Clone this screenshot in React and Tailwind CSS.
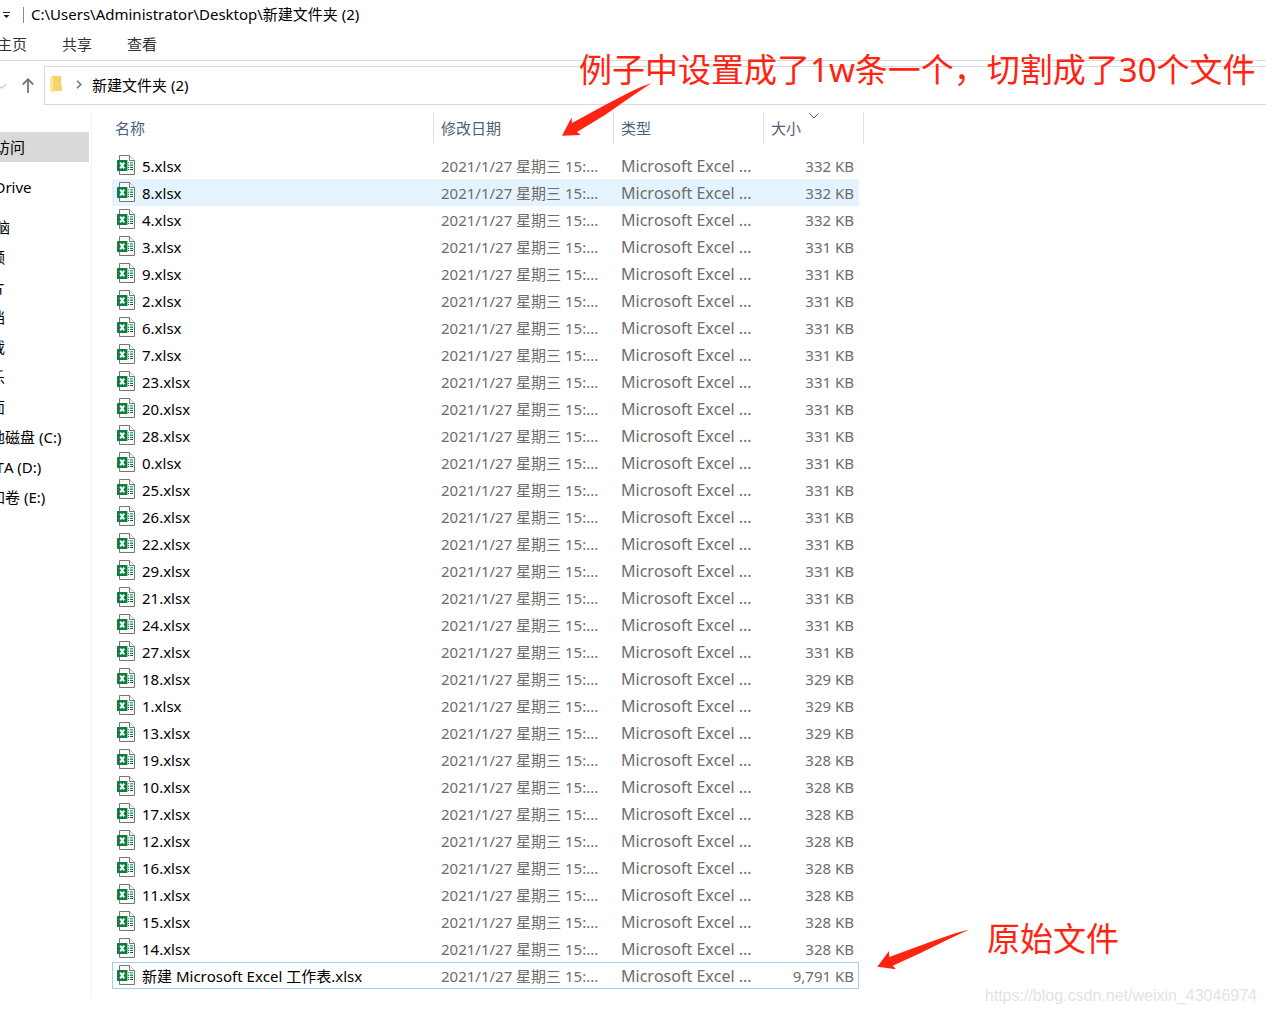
import React, { useState } from 'react';

const MODIFIED = '2021/1/27 星期三 15:...';
const FILE_TYPE = 'Microsoft Excel ...';

const files = [
  { name: '5.xlsx', size: '332 KB' },
  { name: '8.xlsx', size: '332 KB' },
  { name: '4.xlsx', size: '332 KB' },
  { name: '3.xlsx', size: '331 KB' },
  { name: '9.xlsx', size: '331 KB' },
  { name: '2.xlsx', size: '331 KB' },
  { name: '6.xlsx', size: '331 KB' },
  { name: '7.xlsx', size: '331 KB' },
  { name: '23.xlsx', size: '331 KB' },
  { name: '20.xlsx', size: '331 KB' },
  { name: '28.xlsx', size: '331 KB' },
  { name: '0.xlsx', size: '331 KB' },
  { name: '25.xlsx', size: '331 KB' },
  { name: '26.xlsx', size: '331 KB' },
  { name: '22.xlsx', size: '331 KB' },
  { name: '29.xlsx', size: '331 KB' },
  { name: '21.xlsx', size: '331 KB' },
  { name: '24.xlsx', size: '331 KB' },
  { name: '27.xlsx', size: '331 KB' },
  { name: '18.xlsx', size: '329 KB' },
  { name: '1.xlsx', size: '329 KB' },
  { name: '13.xlsx', size: '329 KB' },
  { name: '19.xlsx', size: '328 KB' },
  { name: '10.xlsx', size: '328 KB' },
  { name: '17.xlsx', size: '328 KB' },
  { name: '12.xlsx', size: '328 KB' },
  { name: '16.xlsx', size: '328 KB' },
  { name: '11.xlsx', size: '328 KB' },
  { name: '15.xlsx', size: '328 KB' },
  { name: '14.xlsx', size: '328 KB' },
  { name: '新建 Microsoft Excel 工作表.xlsx', size: '9,791 KB' },
];

const drives = ['视频', '图片', '文档', '下载', '音乐', '桌面', '本地磁盘 (C:)', 'DATA (D:)', '新加卷 (E:)'];

const ExcelIcon = () => (
  <svg width="18" height="20" viewBox="0 0 18 20" className="mb-[2px] shrink-0" aria-hidden="true">
    <path d="M2.5 0.5H12.5L17.5 5.5V19.5H2.5Z" fill="#fafafa" stroke="#757575" />
    <path d="M12.5 0.5V5.5H17.5" fill="#fff" stroke="#757575" />
    <path d="M11 7H12V8H11ZM13 7H16V8.500H13Z" fill="#33c481" />
    <path d="M11 9.500H12V11H11ZM13 9.500H16V11H13Z" fill="#21a366" />
    <path d="M11 12H12V13H11ZM13 12H16V13H13Z" fill="#107c41" />
    <path d="M11 14H12V15H11ZM13 14H16V15H13Z" fill="#185c37" />
    <rect x="0" y="5" width="10.4" height="11" rx="0.6" fill="#107c41" />
    <path d="M3.200 7.600L7.200 13.400M7.200 7.600L3.200 13.400" stroke="#fff" strokeWidth="1.9" />
  </svg>
);

const FolderIcon = () => (
  <svg width="12" height="17" viewBox="0 0 12 17" aria-hidden="true">
    <path d="M2 0H11V10H12V15H2Z" fill="#f7d36b" />
    <path d="M0 0.5L4 2V17L0 15Z" fill="#ffe69c" />
    <path d="M4 2V15" stroke="#eec456" strokeWidth="0.6" />
  </svg>
);

const NavItem = ({ label, root, active }) => (
  <li>
    <button
      type="button"
      className={`flex h-[30px] w-full items-center whitespace-nowrap text-left ${root ? 'pl-0' : 'pl-[10px]'} ${
        active ? 'bg-[#d9d9d9]' : ''
      }`}
    >
      {label}
    </button>
  </li>
);

const HeaderCell = ({ children, colSpan, sorted, first }) => (
  <th colSpan={colSpan} scope="col" className="relative p-0 pb-2 font-normal">
    <button
      type="button"
      className={`flex h-8 w-full items-center border-r border-[#e0e0e0] text-left text-[#4c607a] ${
        first ? 'pl-[3px]' : 'pl-[7px]'
      }`}
    >
      {children}
    </button>
    {sorted && (
      <svg width="10" height="6" viewBox="0 0 10 6" className="absolute left-[45px] top-px" aria-hidden="true">
        <path d="M0.5 0.5L5 5L9.5 0.5" fill="none" stroke="#5a5a5a" />
      </svg>
    )}
  </th>
);

const FileRow = ({ file, hovered, focused, onFocus }) => {
  const bg = hovered ? 'bg-[#e5f3ff]' : '';
  const line = focused ? 'border-y border-[#99d1ff]' : '';
  return (
    <tr className="h-[27px] text-[#6d6d6d]" onClick={onFocus}>
      <td className={`p-0 ${bg} ${line} ${focused ? 'border-l pl-1' : 'pl-[5px]'}`}>
        <div className="flex items-center gap-[7px] whitespace-nowrap text-black">
          <ExcelIcon />
          {file.name}
        </div>
      </td>
      <td className={`whitespace-nowrap p-0 pl-[7px] ${bg} ${line}`}>{MODIFIED}</td>
      <td className={`whitespace-nowrap p-0 pl-[7px] text-base leading-5 ${bg} ${line}`}>{FILE_TYPE}</td>
      <td className={`whitespace-nowrap p-0 text-right ${bg} ${line} ${focused ? 'border-r pr-1' : 'pr-[5px]'}`}>
        {file.size}
      </td>
      <td className="p-0" />
    </tr>
  );
};

const App = () => {
  const [focused, setFocused] = useState(files.length - 1);

  return (
    <div className="relative min-h-screen overflow-hidden bg-white font-['Noto_Sans','Noto_Sans_CJK_SC',sans-serif] text-[15px] leading-5 text-black [font-kerning:none]">
      {/* Title bar */}
      <header className="flex h-[30px] items-center">
        <button type="button" aria-label="自定义快速访问工具栏" className="ml-[3px] w-5">
          <svg width="7" height="7" viewBox="0 0 7 7" aria-hidden="true">
            <path d="M0 0H7V1H0ZM0.5 3H6.5L3.5 6Z" fill="#222" />
          </svg>
        </button>
        <div className="h-4 w-px bg-[#8a8a8a]" />
        <h1 className="ml-[7px] whitespace-nowrap pb-[2px]">C:\Users\Administrator\Desktop\新建文件夹 (2)</h1>
      </header>

      {/* Ribbon tabs, the first one runs off the left edge */}
      <nav className="-ml-[3px] flex h-[31px] items-center gap-[35px] border-b border-[#dadada] pb-[2px] text-[#333]">
        <button type="button">主页</button>
        <button type="button">共享</button>
        <button type="button">查看</button>
      </nav>

      {/* Address bar */}
      <div className="flex items-center pt-[5px]">
        <div className="flex w-11 shrink-0 items-center gap-[15px]">
          <svg width="7" height="6" viewBox="0 0 7 6" aria-hidden="true">
            <path d="M0 4L2 5L6 1" fill="none" stroke="#d0d0d0" strokeWidth="1.5" />
          </svg>
          <button type="button" aria-label="上移">
            <svg width="12" height="15" viewBox="0 0 12 15" className="block" aria-hidden="true">
              <path d="M6 15V1.5M0.8 6.5L6 1.2L11.2 6.5" fill="none" stroke="#757575" strokeWidth="1.8" />
            </svg>
          </button>
        </div>
        <div className="flex h-[39px] flex-1 items-center border-y border-l border-[#d9d9d9] pb-[2px] pl-[5px]">
          <FolderIcon />
          <svg width="6" height="9" viewBox="0 0 6 9" className="ml-[14px]" aria-hidden="true">
            <path d="M1 0.7L4.8 4.5L1 8.3" fill="none" stroke="#757575" strokeWidth="1.6" />
          </svg>
          <button type="button" className="ml-[10px]">新建文件夹 (2)</button>
        </div>
      </div>

      <div className="flex pt-[7px]">
        {/* Navigation pane */}
        <aside className="w-[91px] shrink-0 pt-5">
          <ul className="-ml-[35px] mr-[2px]">
            <NavItem label="快速访问" root active />
          </ul>
          <ul className="-ml-[35px] mt-[10px]">
            <NavItem label="OneDrive" root />
          </ul>
          <ul className="-ml-[35px] mt-[10px]">
            <NavItem label="此电脑" root />
            {drives.map((label) => (
              <NavItem key={label} label={label} />
            ))}
          </ul>
        </aside>

        {/* File list */}
        <main className="flex-1 border-l border-[#f3f3f3] pb-[10px] pl-5">
          <table className="w-[752px] table-fixed border-separate border-spacing-0">
            <colgroup>
              <col className="w-[322px]" />
              <col className="w-[180px]" />
              <col className="w-[150px]" />
              <col className="w-[95px]" />
              <col className="w-[5px]" />
            </colgroup>
            <thead>
              <tr>
                <HeaderCell first>名称</HeaderCell>
                <HeaderCell>修改日期</HeaderCell>
                <HeaderCell>类型</HeaderCell>
                <HeaderCell colSpan={2} sorted>大小</HeaderCell>
              </tr>
            </thead>
            <tbody>
              {files.map((file, i) => (
                <FileRow
                  key={file.name}
                  file={file}
                  hovered={i === 1}
                  focused={i === focused}
                  onFocus={() => setFocused(i)}
                />
              ))}
            </tbody>
          </table>
        </main>
      </div>

      {/* Red notes on top of the window */}
      <p className="absolute left-[579px] top-[48px] whitespace-nowrap text-[33px] leading-[44px] text-[#ff2412]">
        例子中设置成了1w条一个，切割成了30个文件
      </p>
      <svg width="92" height="56" viewBox="0 0 92 56" className="absolute left-[561px] top-[82px]" aria-hidden="true">
        <path d="M90.500 1Q80 4.500 70 9.500L44 23L11 41L10.500 35.500L1 53.700L19.500 53L16 50L44 33L72 13.500Z" fill="#ff2412" />
      </svg>
      <p className="absolute left-[987px] top-[917px] whitespace-nowrap text-[33px] leading-[44px] text-[#ff2412]">
        原始文件
      </p>
      <svg width="94" height="42" viewBox="0 0 94 42" className="absolute left-[876px] top-[929px]" aria-hidden="true">
        <path d="M93.300 0.600L80 4L54 13L13.300 28L13 22L1.300 37.700L20 40.200L16.700 36.700L44 24.300L72 10.500Z" fill="#ff2412" />
      </svg>
      <p className="absolute right-[9px] top-[986px] font-['Liberation_Sans',sans-serif] text-base leading-5 text-[#e3e3e3]">
        https://blog.csdn.net/weixin_43046974
      </p>
    </div>
  );
};

export default App;
